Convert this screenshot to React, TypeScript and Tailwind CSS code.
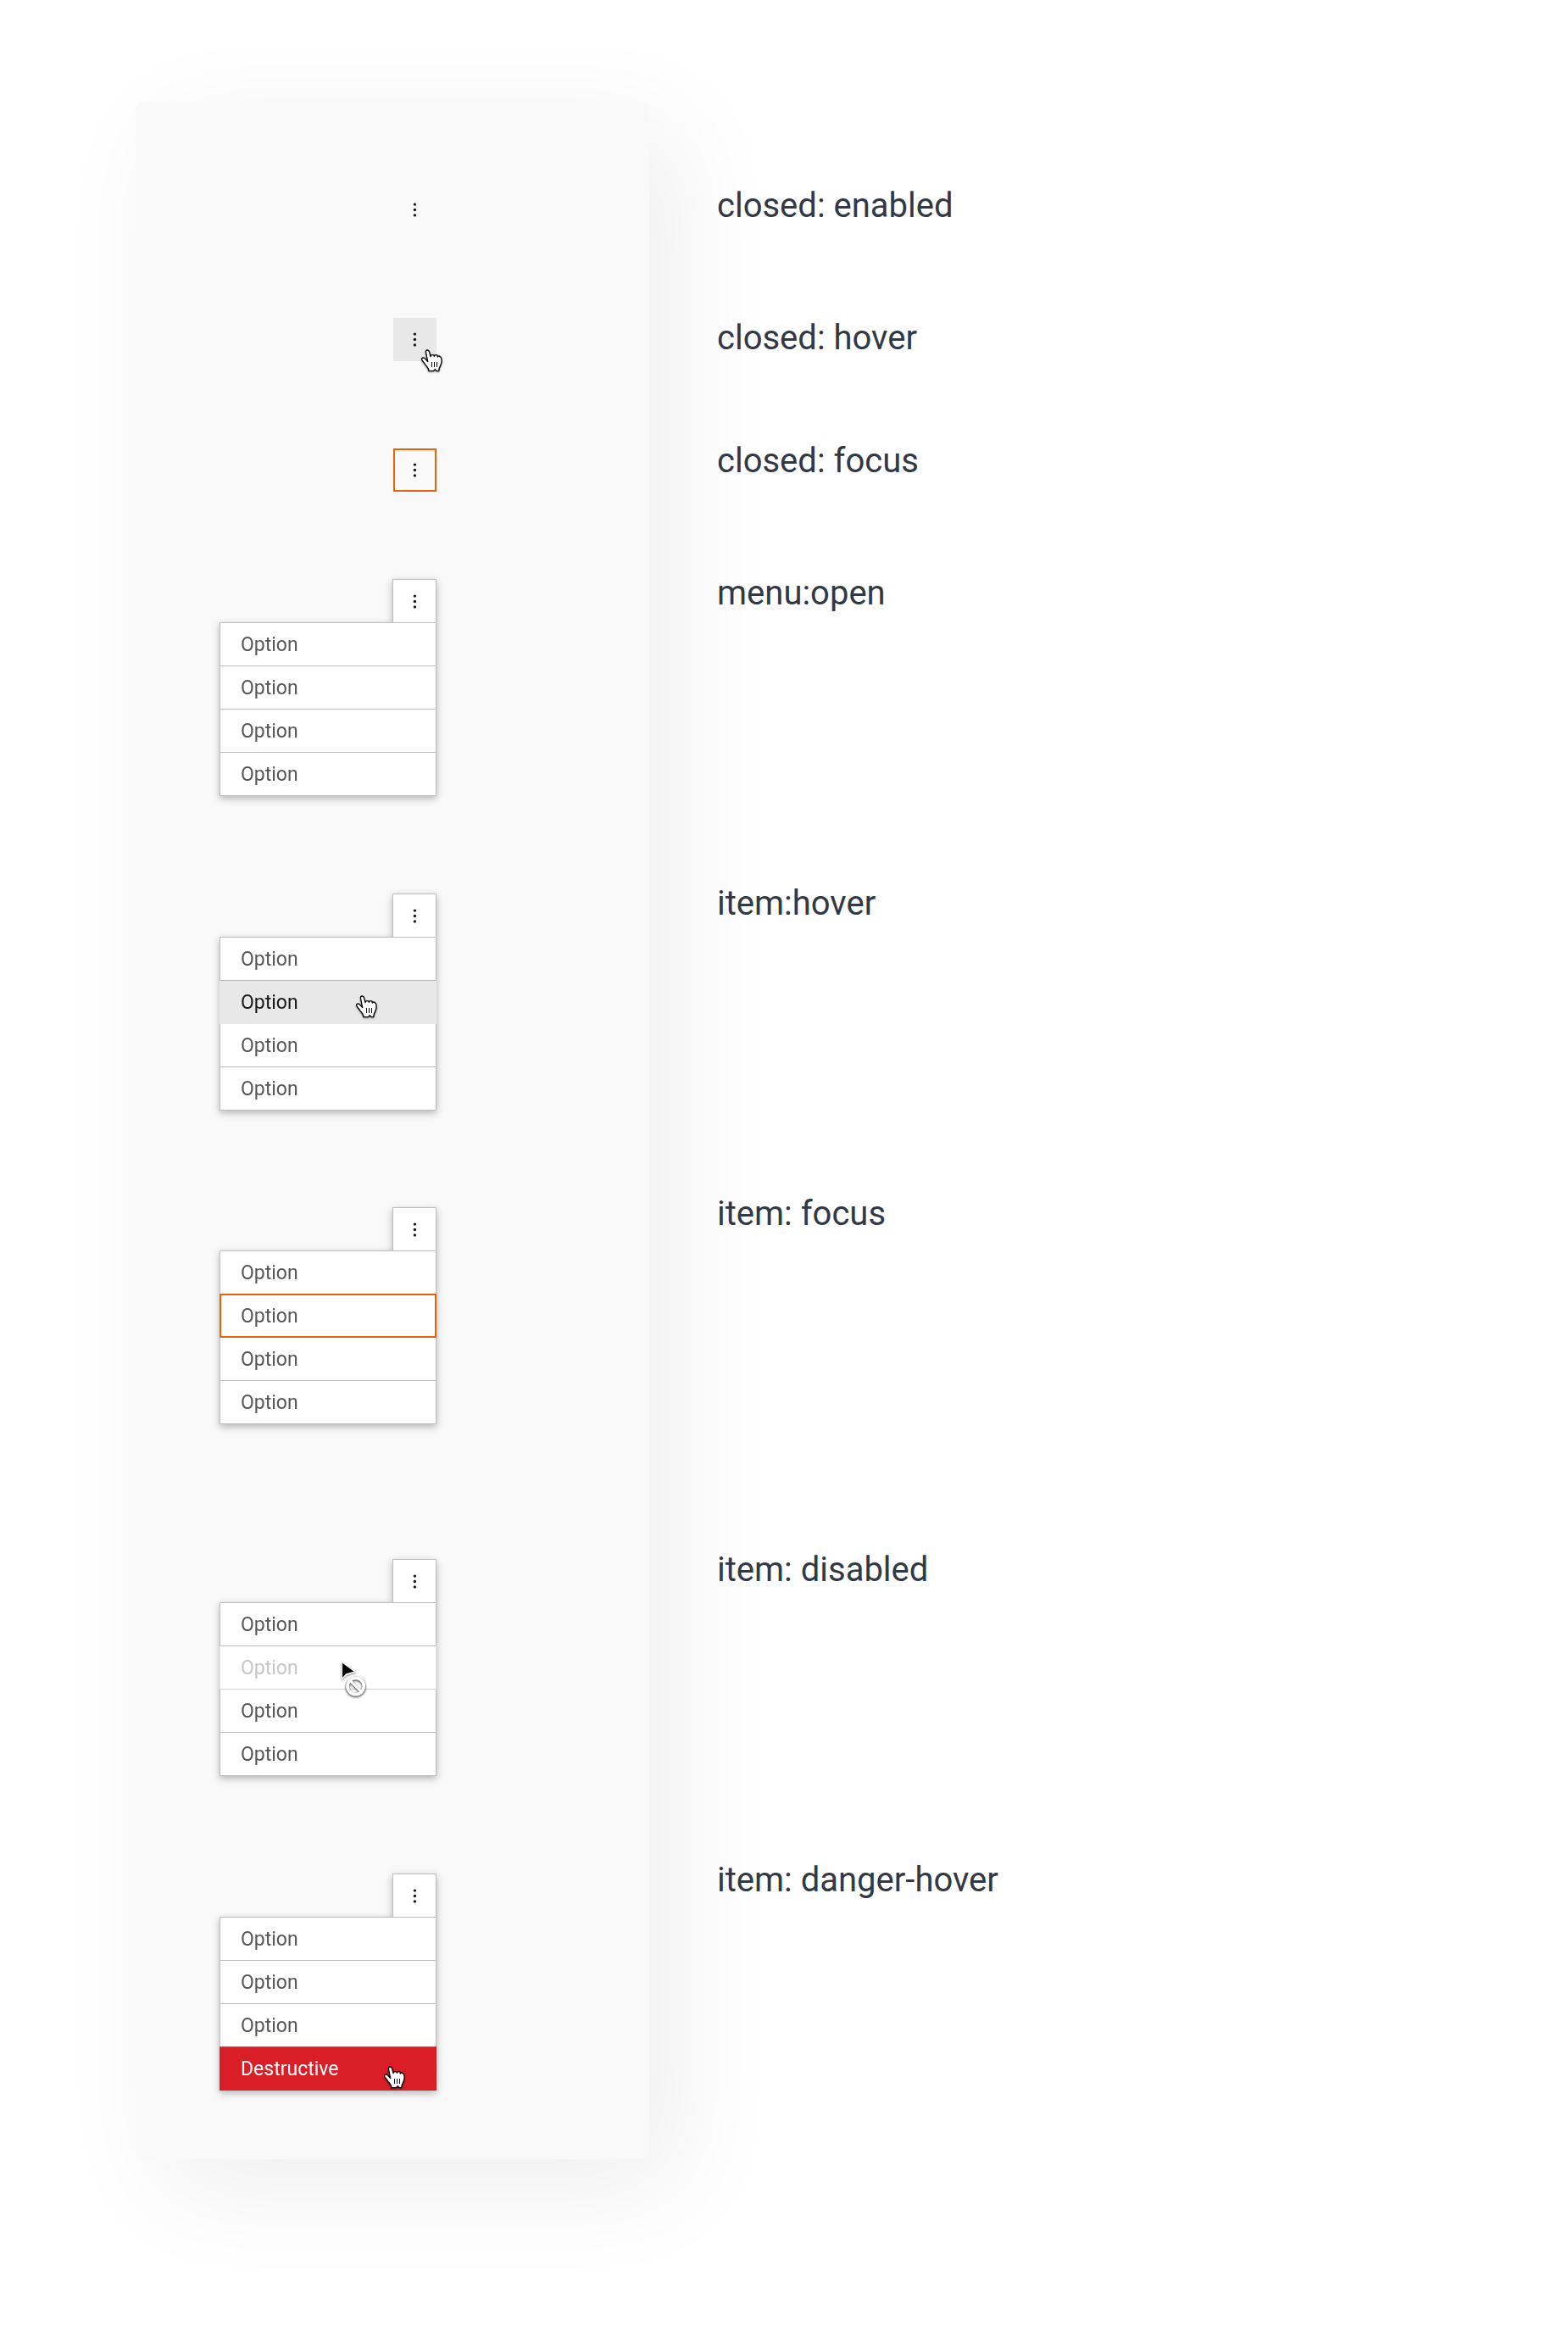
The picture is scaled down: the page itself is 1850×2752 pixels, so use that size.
import type { ReactNode } from "react";
import clsx from "clsx";

type ItemState = "enabled" | "hover" | "focus" | "disabled" | "danger";
type TriggerState = "enabled" | "hover" | "focus" | "open";

interface Item {
  label: string;
  state?: ItemState;
}

interface Spec {
  label: string;
  trigger: TriggerState;
  items?: Item[];
  // space above the preview and above its caption
  previewGap?: string;
  captionGap?: string;
}

const option: Item = { label: "Option" };

const specs: Spec[] = [
  { label: "closed: enabled", trigger: "enabled" },
  { label: "closed: hover", trigger: "hover", previewGap: "mt-[102px]", captionGap: "mt-[108px]" },
  { label: "closed: focus", trigger: "focus", previewGap: "mt-[103px]", captionGap: "mt-[97px]" },
  {
    label: "menu:open",
    trigger: "open",
    items: [option, option, option, option],
    previewGap: "mt-[103px]",
    captionGap: "mt-[108px]",
  },
  {
    label: "item:hover",
    trigger: "open",
    items: [option, { label: "Option", state: "hover" }, option, option],
    previewGap: "mt-[115px]",
    captionGap: "mt-[318px]",
  },
  {
    label: "item: focus",
    trigger: "open",
    items: [option, { label: "Option", state: "focus" }, option, option],
    previewGap: "mt-[114px]",
    captionGap: "mt-[318px]",
  },
  {
    label: "item: disabled",
    trigger: "open",
    items: [option, { label: "Option", state: "disabled" }, option, option],
    previewGap: "mt-[159px]",
    captionGap: "mt-[372px]",
  },
  {
    label: "item: danger-hover",
    trigger: "open",
    items: [option, option, option, { label: "Destructive", state: "danger" }],
    previewGap: "mt-[115px]",
    captionGap: "mt-[318px]",
  },
];

const triggerStyles: Record<TriggerState, string> = {
  enabled: "w-[51px]",
  hover: "w-[51px] bg-[#e8e8e8]",
  focus: "w-[51px] border-2 border-[#eb6200]",
  open: "w-[52px] border border-b-0 border-[#bebebe] bg-white",
};

const itemStyles: Record<ItemState, string> = {
  enabled: "border border-[#bebebe] bg-white text-[#565656]",
  hover: "z-10 border border-[#e8e8e8] border-t-[#b8b8b8] bg-[#e8e8e8] text-[#171717]",
  focus: "z-10 border-2 border-[#eb6200] bg-white text-[#565656]",
  disabled: "z-10 border border-[#e4e4e4] border-t-[#bebebe] border-b-[#cfcfcf] bg-white text-[#c6c6c6]",
  danger: "z-10 border border-[#da1e28] border-t-[#c0505a] bg-[#da1e28] text-white",
};

function HandCursor({ className }: { className: string }) {
  return (
    <svg
      viewBox="0 0 78 84"
      width="26"
      height="28"
      aria-hidden="true"
      className={clsx("pointer-events-none absolute drop-shadow-[0_1px_1px_rgba(0,0,0,0.35)]", className)}
    >
      <path
        d="M23 44 L17 14 C15 8 17 3 22 3 C26 3 28 6 29 10 L33 26 C33 22 36 20 40 20 C44 20 46 22 46 25 C47 22 49 20 53 20 C57 20 58 23 58 27 C59 24 62 23 66 25 C70 27 72 31 72 36 C73 44 72 50 69 56 C66 62 63 66 63 72 L62 77 H54 L49 71 L43 77 H27 C27 67 20 62 15 55 C11 49 9 46 5 42 C1 38 1 33 4 31 C8 29 12 31 15 35 Z"
        fill="#fff"
        stroke="#000"
        strokeWidth="4"
        strokeLinejoin="round"
      />
      <path d="M37.5 45 V63 M46.5 45 V63 M55.5 45 V63" stroke="#000" strokeWidth="3" fill="none" />
    </svg>
  );
}

function BlockedCursor({ className }: { className: string }) {
  return (
    <svg
      viewBox="0 0 96 138"
      width="32"
      height="46"
      aria-hidden="true"
      className={clsx("pointer-events-none absolute drop-shadow-[0_1px_1px_rgba(0,0,0,0.5)]", className)}
    >
      <path d="M3 1 V68 L20 52 L56 40 Z" fill="#fff" />
      <path d="M6 8 V60 L19 46 L47 38 Z" fill="#000" />
      <circle cx="53" cy="92" r="29" fill="none" stroke="#6f6f6f" strokeOpacity="0.7" strokeWidth="15" />
      <path d="M33 72 L73 112" stroke="#6f6f6f" strokeOpacity="0.7" strokeWidth="12" />
      <circle cx="53" cy="90" r="29" fill="none" stroke="#fff" strokeWidth="11" />
      <path d="M33 70 L73 110" stroke="#fff" strokeWidth="9" />
    </svg>
  );
}

function Trigger({ state, label }: { state: TriggerState; label: string }) {
  return (
    <button
      type="button"
      aria-label={`${label} menu`}
      aria-expanded={state === "open"}
      className={clsx("relative flex h-[51px] items-center justify-center", triggerStyles[state])}
    >
      <svg viewBox="0 0 51 51" className="h-[51px] w-[51px] shrink-0" fill="#171717" aria-hidden="true">
        <circle cx="25.4" cy="19.1" r="1.7" />
        <circle cx="25.4" cy="25.5" r="1.7" />
        <circle cx="25.4" cy="31.9" r="1.7" />
      </svg>
      {state === "hover" && <HandCursor className="top-[37px] left-[33px]" />}
    </button>
  );
}

const cursors: Partial<Record<ItemState, ReactNode>> = {
  hover: <HandCursor className="top-[17px] left-40" />,
  disabled: <BlockedCursor className="top-[17px] left-[142px]" />,
  danger: <HandCursor className="top-[22px] left-[193px]" />,
};

function MenuItem({ label, state = "enabled" }: Item) {
  return (
    <li className="-mt-px first:mt-0">
      <button
        type="button"
        disabled={state === "disabled"}
        className={clsx(
          "relative flex h-[52px] w-full items-center pt-0.5 text-left text-[23px] leading-7",
          state === "focus" ? "pl-[23px]" : "pl-6",
          itemStyles[state],
        )}
      >
        {label}
        {cursors[state]}
      </button>
    </li>
  );
}

function OverflowMenu({ spec }: { spec: Spec }) {
  return (
    <div
      className={clsx(
        "flex w-64 flex-col items-end",
        spec.items && "drop-shadow-[0_3px_4px_rgba(0,0,0,0.28)]",
        spec.previewGap,
      )}
    >
      <Trigger state={spec.trigger} label={spec.label} />
      {spec.items && (
        <ul className="w-full">
          {spec.items.map((item, i) => (
            <MenuItem key={i} {...item} />
          ))}
        </ul>
      )}
    </div>
  );
}

export default function App() {
  return (
    <main className="flex min-h-screen items-start bg-white pt-[120px] pb-[205px] pl-40 font-['Roboto',sans-serif]">
      <section className="flex w-[606px] shrink-0 flex-col rounded-[10px] bg-[#f9f9f9] pt-[102px] pb-[81px] pl-[99px] shadow-[32px_32px_128px_rgba(0,0,0,0.07)]">
        {specs.map((spec) => (
          <OverflowMenu key={spec.label} spec={spec} />
        ))}
      </section>

      <section className="relative flex min-w-0 flex-1 flex-col pt-[99px] pl-20">
        {specs.map((spec) => (
          <h2 key={spec.label} className={clsx("text-[40px] leading-12 text-[#323946]", spec.captionGap)}>
            {spec.label}
          </h2>
        ))}
      </section>
    </main>
  );
}
